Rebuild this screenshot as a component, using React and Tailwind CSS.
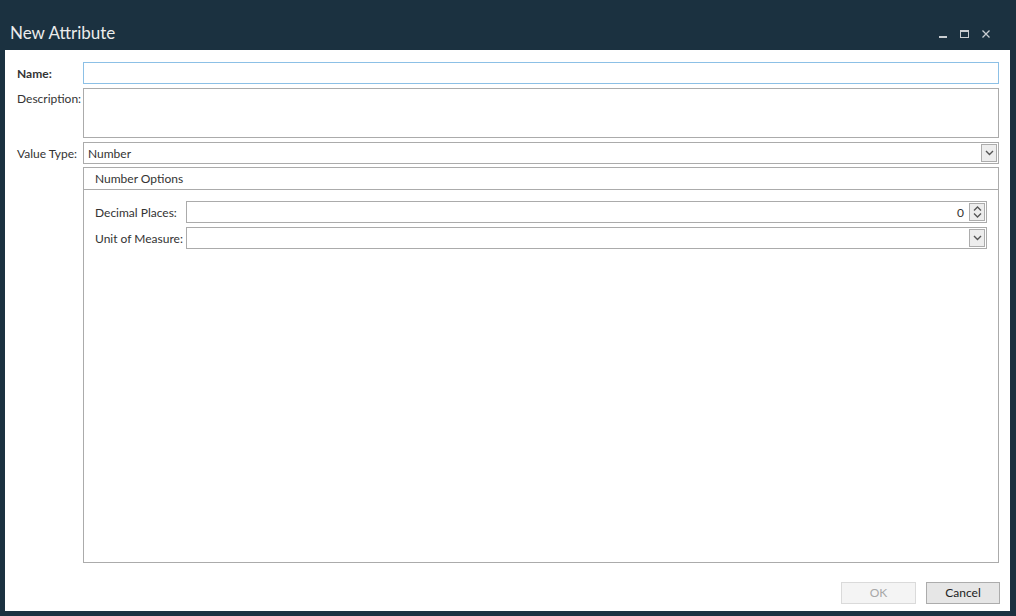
import React from 'react';

const font = { fontFamily: '"Lato", "Open Sans", sans-serif' };

const ChevronDown = () => (
    <svg width="9" height="6" viewBox="0 0 9 6">
        <path d="M1 1 L4.5 4.5 L8 1" fill="none" stroke="#555" strokeWidth="1.4" />
    </svg>
);

const DropArrow = () => (
    <div className="w-[16px] h-[18px] mr-[1px] border border-[#acacac] bg-[#ededed] flex items-center justify-center">
        <ChevronDown />
    </div>
);

const Spinner = () => (
    <div className="w-[16px] h-[18px] mr-[1px] border border-[#acacac] bg-[#ededed] flex flex-col items-center justify-center gap-[2px]">
        <svg width="9" height="5" viewBox="0 0 9 5">
            <path d="M1 4.5 L4.5 1 L8 4.5" fill="none" stroke="#555" strokeWidth="1.3" />
        </svg>
        <svg width="9" height="5" viewBox="0 0 9 5">
            <path d="M1 0.5 L4.5 4 L8 0.5" fill="none" stroke="#555" strokeWidth="1.3" />
        </svg>
    </div>
);

const App = () => {
    return (
        <div className="w-[1016px] h-[616px] bg-[#1b3140] flex flex-col text-[12px] text-[#333]" style={font}>
            {/* Title bar */}
            <div className="h-[50px] flex items-center justify-between pl-[10px] pr-[26px] pt-[14px]">
                <span className="text-[17px] text-[#ececec] leading-none">New Attribute</span>
                <div className="flex items-center gap-[13px] mt-[3px]">
                    <div className="w-[8px] h-[8px] flex items-end">
                        <div className="w-[8px] h-[2px] bg-[#c9cdd1]" />
                    </div>
                    <div className="w-[9px] h-[8px] border border-[#c9cdd1] border-t-2" />
                    <svg width="8" height="8" viewBox="0 0 8 8">
                        <path d="M0.5 0.5 L7.5 7.5 M7.5 0.5 L0.5 7.5" stroke="#c9cdd1" strokeWidth="1.3" />
                    </svg>
                </div>
            </div>

            {/* Body */}
            <div className="flex-1 ml-[5px] mr-[6px] mb-[5px] bg-white flex flex-col pt-[12px] pl-[12px] pr-[11px] pb-[7px]">
                <div className="flex flex-col gap-[4px]">
                    <div className="flex items-center">
                        <label className="w-[66px] font-bold pt-[1px]">Name:</label>
                        <div className="flex-1 h-[22px] border border-[#8cc0e6]" />
                    </div>
                    <div className="flex items-start">
                        <label className="w-[66px] pt-[2px]">Description:</label>
                        <div className="flex-1 h-[50px] border border-[#ababab]" />
                    </div>
                    <div className="flex items-center">
                        <label className="w-[66px] pt-[1px]">Value Type:</label>
                        <div className="flex-1 h-[22px] border border-[#ababab] flex items-center justify-between pl-[4px]">
                            <span className="pt-[1px]">Number</span>
                            <DropArrow />
                        </div>
                    </div>
                </div>

                {/* Group box */}
                <div className="ml-[66px] mt-[3px] flex-1 border border-[#ababab] flex flex-col">
                    <div className="h-[22px] border-b border-[#ababab] flex items-center pl-[11px] pt-[1px]">Number Options</div>
                    <div className="flex flex-col gap-[4px] pt-[11px] pl-[11px] pr-[11px]">
                        <div className="flex items-center">
                            <label className="w-[91px] pt-[1px]">Decimal Places:</label>
                            <div className="flex-1 h-[22px] border border-[#ababab] flex items-center justify-end gap-[5px]">
                                <span className="pt-[1px]">0</span>
                                <Spinner />
                            </div>
                        </div>
                        <div className="flex items-center">
                            <label className="w-[91px] pt-[1px]">Unit of Measure:</label>
                            <div className="flex-1 h-[22px] border border-[#ababab] flex items-center justify-end">
                                <DropArrow />
                            </div>
                        </div>
                    </div>
                </div>

                {/* Buttons */}
                <div className="flex justify-end gap-[10px] mt-[19px] -mr-[1px]">
                    <button className="w-[75px] h-[22px] bg-[#f4f4f4] border border-[#dadada] text-[#a8a8a8]">OK</button>
                    <button className="w-[74px] h-[22px] bg-[#e6e6e6] border border-[#acacac] text-[#222]">Cancel</button>
                </div>
            </div>
        </div>
    );
};

export default App;
